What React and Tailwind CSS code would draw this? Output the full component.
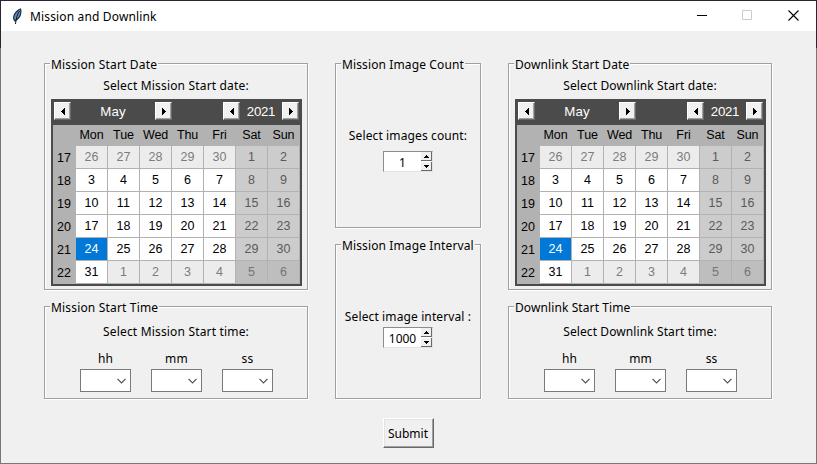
import React from "react";

const DAYS = ["Mon", "Tue", "Wed", "Thu", "Fri", "Sat", "Sun"];
const FIRST = new Date(2021, 3, 26);
const WEEKS = [17, 18, 19, 20, 21, 22].map((week, w) => ({
  week,
  days: DAYS.map((_, d) => {
    const date = new Date(FIRST.getFullYear(), FIRST.getMonth(), FIRST.getDate() + w * 7 + d);
    return { day: date.getDate(), outside: date.getMonth() !== 4, weekend: d > 4 };
  }),
}));

function cellClass({ day, outside, weekend }, w) {
  if (!outside && day === 24) return "bg-[#0078d7] text-white";
  if (outside && weekend && w === 5) return "bg-[#bebebe] text-[#747474]";
  if (weekend) return "bg-[#cccccc] text-[#5a5a5a]";
  if (outside) return "bg-[#ececec] text-[#7c7c7c]";
  return "bg-white text-black";
}

function ArrowButton({ left }) {
  return (
    <button className="flex h-[18px] w-[17px] items-center justify-center border border-t-white border-l-white border-r-[#696969] border-b-[#696969] bg-[#f0f0f0] shadow-[inset_-1px_-1px_0_#a0a0a0]">
      <svg width="4" height="7" viewBox="0 0 4 7" shapeRendering="crispEdges">
        <path
          d={left ? "M3 0h1v7H3V6H2V5H1V4H0V3h1V2h1V1h1z" : "M0 0h1v1h1v1h1v1h1v1H3v1H2v1H1v1H0z"}
          fill="#000"
        />
      </svg>
    </button>
  );
}

function Calendar() {
  return (
    <div className="ml-[6px] w-[251px] bg-[#4b4b4b] px-[2px] pb-[2px] font-['Liberation_Sans',Arial,sans-serif]">
      <div className="flex h-[26px] items-start pt-[3px] pl-px text-[13.3px] leading-[19px] text-white">
        <ArrowButton left />
        <span className="w-[84px] text-center">May</span>
        <ArrowButton />
        <span className="w-[51px]" />
        <ArrowButton left />
        <span className="w-[42px] text-center tracking-[-0.3px]">2021</span>
        <ArrowButton />
      </div>
      <div className="grid grid-cols-[22px_repeat(7,31px)] gap-x-px bg-[#b2b2b2] pr-px text-[12.5px]">
        <span />
        {DAYS.map((d) => (
          <span key={d} className="h-[21px] text-center leading-[21px] tracking-[-0.1px] text-black">{d}</span>
        ))}
        {WEEKS.map(({ week, days }, w) => (
          <React.Fragment key={week}>
            <span className="h-[23px] text-center leading-[25px] text-black">{week}</span>
            {days.map((c, i) => (
              <span key={i} className={"mb-px h-[22px] text-center leading-[23px] " + cellClass(c, w)}>{c.day}</span>
            ))}
          </React.Fragment>
        ))}
      </div>
    </div>
  );
}

function Group({ title, className, children }) {
  return (
    <section className={"relative border border-[#a0a0a0] shadow-[inset_1px_1px_0_#fff,1px_1px_0_#fff] " + className}>
      <h2 className="absolute -top-[8px] left-[5px] bg-[#f0f0f0] px-px leading-[18px] whitespace-nowrap">{title}</h2>
      {children}
    </section>
  );
}

function TimeSelect({ unit }) {
  return (
    <label className="flex w-[51px] flex-col">
      <span className="h-[20px] text-center leading-[20px]">{unit}</span>
      <span className="flex h-[23px] items-center justify-end border border-[#7a7a7a] bg-white pr-[4px]">
        <svg width="9" height="6" viewBox="0 0 9 6" fill="none">
          <path d="M0.5 0.8l4 4 4-4" stroke="#505050" strokeWidth="1.2" />
        </svg>
      </span>
    </label>
  );
}

function SpinButton({ up }) {
  return (
    <span className="flex h-[9px] w-[11px] items-center justify-center border-r border-b border-[#696969] bg-[#f0f0f0]">
      <svg width="5" height="3" viewBox="0 0 5 3" shapeRendering="crispEdges">
        <path d={up ? "M2 0h1v1h1v1h1v1H0V2h1V1h1z" : "M0 0h5v1H4v1H3v1H2V2H1V1H0z"} fill="#000" />
      </svg>
    </span>
  );
}

function Spinbox({ value }) {
  return (
    <div className="mx-auto flex h-[21px] w-[50px] border border-t-[#8c8c8c] border-l-[#8c8c8c] border-r-[#e3e3e3] border-b-[#e3e3e3] bg-white">
      <span className="w-[37px] text-center leading-[21px] tracking-normal">{value}</span>
      <span className="flex flex-col gap-px">
        <SpinButton up />
        <SpinButton />
      </span>
    </div>
  );
}

function ScheduleColumn({ name, className }) {
  return (
    <div className={"flex w-[264px] flex-col " + className}>
      <Group title={`${name} Start Date`} className="h-[227px]">
        <p className="mt-[13px] mb-[4px] h-[18px] text-center leading-[18px]">Select {name} Start date:</p>
        <Calendar />
      </Group>
      <Group title={`${name} Start Time`} className="mt-[16px] h-[93px]">
        <p className="mt-[16px] text-center leading-[18px]">Select {name} Start time:</p>
        <div className="mt-[8px] ml-[35px] flex gap-[20px]">
          <TimeSelect unit="hh" />
          <TimeSelect unit="mm" />
          <TimeSelect unit="ss" />
        </div>
      </Group>
    </div>
  );
}

export default function App() {
  return (
    <div className="h-[464px] w-[817px] bg-[linear-gradient(#2a2433_48px,#777_48px)] p-px font-['Noto_Sans','Open_Sans',sans-serif] text-[12px] text-black">
      <div className="flex h-[462px] flex-col bg-[#f0f0f0]">
        <header className="flex h-[30px] shrink-0 items-center bg-white">
          <svg className="ml-[11px]" width="11" height="17" viewBox="0 0 11 17">
            <path d="M8.500 1C6 1.800 2.500 5 1.700 9c-.3 1.500 0 2.800 1 3.800C5 11.800 7.500 9.500 8.500 6.500 9.200 4.300 9.200 2.500 8.500 1z" fill="#5b93cf" stroke="#26303c" strokeWidth="1.300" />
            <path d="M7.500 3C5.500 6 4 10 3.500 16" stroke="#111" strokeWidth="1" fill="none" />
          </svg>
          <h1 className="ml-[7px] pt-[2px] leading-[18px] tracking-[0.15px]">Mission and Downlink</h1>
          <svg className="mr-[13px] ml-auto" width="106" height="12" viewBox="0 0 106 12" fill="none">
            <path d="M0 5.500h10" stroke="#000" />
            <path d="M45.500 .5h9v9h-9z" stroke="#ccc" />
            <path d="M91.500 .5l10 10M101.500 .5l-10 10" stroke="#000" strokeWidth="1.100" />
          </svg>
        </header>
        <main className="flex gap-[27px] pt-[32px] pl-[43px]">
          <ScheduleColumn name="Mission" className="tracking-[0.17px]" />
          <div className="flex w-[146px] flex-col tracking-[0.12px]">
            <Group title="Mission Image Count" className="h-[165px]">
              <p className="mt-[63px] mb-[6px] text-center leading-[18px]">Select images count:</p>
              <Spinbox value="1" />
            </Group>
            <Group title="Mission Image Interval" className="mt-[16px] h-[155px]">
              <p className="mt-[63px] mb-px text-center leading-[18px]">Select image interval :</p>
              <Spinbox value="1000" />
            </Group>
          </div>
          <ScheduleColumn name="Downlink" className="tracking-[0.1px]" />
        </main>
        <button className="mt-[19px] ml-[382px] h-[30px] w-[51px] border border-t-white border-l-white border-r-[#696969] border-b-[#696969] bg-[#f0f0f0] pt-[2px] pr-px shadow-[inset_-1px_-1px_0_#a0a0a0,inset_1px_1px_0_#e3e3e3]">
          Submit
        </button>
      </div>
    </div>
  );
}
